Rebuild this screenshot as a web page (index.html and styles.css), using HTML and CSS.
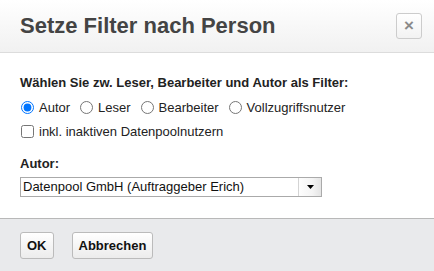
FILE: index.html
```html
<!DOCTYPE html>
<html lang="de">
<head>
    <meta charset="UTF-8">
    <title>Setze Filter nach Person</title>
    <link rel="stylesheet" href="styles.css">
</head>
<body>
    <div class="dialog">
        <div class="dialog-header">
            <h1>Setze Filter nach Person</h1>
            <button class="close" type="button">&times;</button>
        </div>
        <div class="dialog-body">
            <div class="label">Wählen Sie zw. Leser, Bearbeiter und Autor als Filter:</div>
            <div class="row">
                <label class="opt"><input type="radio" name="rolle" checked>Autor</label>
                <label class="opt"><input type="radio" name="rolle">Leser</label>
                <label class="opt"><input type="radio" name="rolle">Bearbeiter</label>
                <label class="opt"><input type="radio" name="rolle">Vollzugriffsnutzer</label>
            </div>
            <div class="row">
                <label class="opt"><input type="checkbox">inkl. inaktiven Datenpoolnutzern</label>
            </div>
            <div class="label autor">Autor:</div>
            <div class="select">
                <span class="select-text">Datenpool GmbH (Auftraggeber Erich)</span>
                <span class="select-arrow">
                    <svg width="7" height="4" viewBox="0 0 7 4"><path d="M0 0h7L3.5 4z" fill="#000"/></svg>
                </span>
            </div>
        </div>
        <div class="dialog-footer">
            <button class="btn" type="button">OK</button>
            <button class="btn" type="button">Abbrechen</button>
        </div>
    </div>
</body>
</html>
```

FILE: styles.css
```css
body {
    margin: 0;
    font-family: 'Liberation Sans', Arial, sans-serif;
    font-size: 13px;
    color: #222;
    background: #fff;
}

.dialog {
    height: 271px;
    display: flex;
    flex-direction: column;
}

.dialog-header {
    height: 52px;
    padding: 0 12px 0 20px;
    display: flex;
    align-items: center;
    justify-content: space-between;
    background: linear-gradient(#ffffff, #f1f1f1);
    border-bottom: 1px solid #dcdcdc;
}

h1 {
    margin: 0;
    font-size: 22px;
    font-weight: bold;
    color: #444;
}

.close {
    width: 26px;
    height: 26px;
    padding: 0;
    border: 1px solid #ccc;
    border-radius: 3px;
    background: linear-gradient(#ffffff, #f2f2f2);
    color: #8a8a8a;
    font-family: 'Liberation Sans', Arial, sans-serif;
    font-size: 17px;
    font-weight: bold;
    line-height: 22px;
}

.dialog-body {
    padding: 18px 20px 21px;
}

.label {
    font-weight: bold;
    line-height: 24px;
}

.row {
    display: flex;
    height: 24px;
    align-items: center;
}

.opt {
    display: flex;
    align-items: center;
    margin-right: 9px;
}

.opt input {
    width: 13px;
    height: 13px;
    margin: 0 5px 0 1px;
}

.label.autor {
    line-height: 16px;
    margin-top: 13px;
}

.select {
    margin-top: 5px;
    width: 300px;
    height: 18px;
    border: 1px solid #aaa;
    display: flex;
    align-items: center;
    background: #fff;
}

.select-text {
    flex: 1;
    padding-left: 2px;
    line-height: 18px;
    color: #111;
}

.select-arrow {
    width: 22px;
    height: 18px;
    display: flex;
    align-items: center;
    justify-content: center;
    border-left: 1px solid #d4d4d4;
    background: linear-gradient(90deg, #fdfdfd, #f4f4f4 60%, #e4e4e4);
}

.dialog-footer {
    flex: 1;
    padding: 13px 20px 0;
    display: flex;
    align-items: flex-start;
    gap: 18px;
    background: #e9eaec;
    border-top: 1px solid #b8b8b8;
}

.btn {
    height: 27px;
    padding: 0 6px;
    border: 1px solid #bbb;
    border-radius: 3px;
    background: linear-gradient(#ffffff, #ececec);
    color: #111;
    font-family: 'Liberation Sans', Arial, sans-serif;
    font-size: 13px;
    font-weight: bold;
}
```
